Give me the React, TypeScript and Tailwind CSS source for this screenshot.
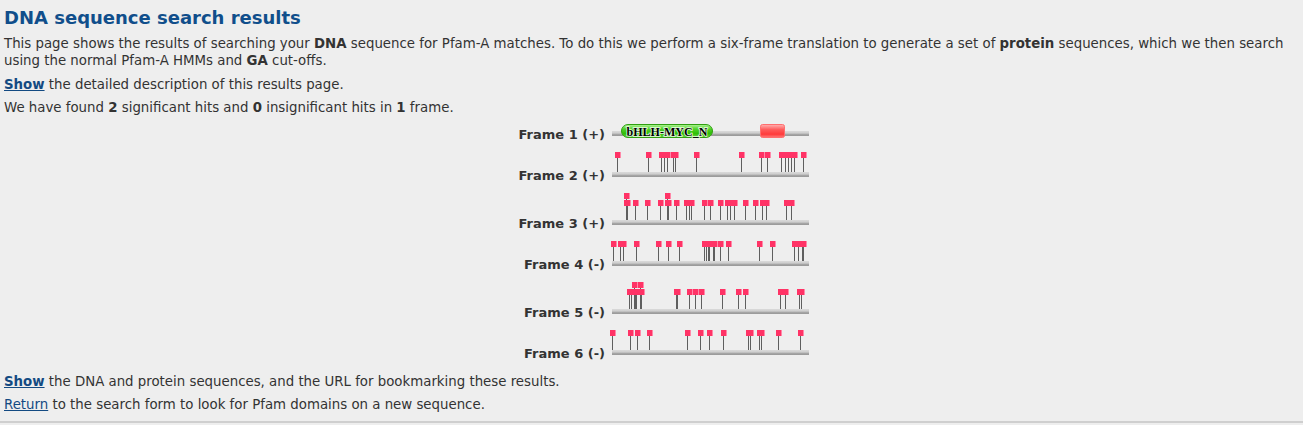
const frames = [
  { label: "Frame 2 (+)", h: 41, lower: [5, 36, 49, 52, 55, 61, 63, 84, 129, 149, 155, 169, 173, 176, 179, 182, 191], upper: [] as number[] },
  {
    label: "Frame 3 (+)",
    h: 48,
    lower: [14, 15, 23, 35, 48, 55, 56, 64, 74, 77, 79, 92, 98, 108, 115, 118, 122, 133, 143, 150, 154, 174, 179],
    upper: [14, 55],
  },
  { label: "Frame 4 (-)", h: 41, lower: [1, 8, 11, 24, 46, 56, 67, 92, 94, 96, 97, 101, 102, 108, 116, 147, 160, 182, 186, 190, 191], upper: [] },
  {
    label: "Frame 5 (-)",
    h: 48,
    lower: [17, 19, 23, 24, 28, 29, 64, 65, 77, 83, 89, 110, 126, 133, 168, 173, 187, 189],
    upper: [22, 28],
  },
  { label: "Frame 6 (-)", h: 41, lower: [0, 18, 25, 37, 75, 88, 97, 111, 136, 138, 147, 149, 166, 188], upper: [] },
];

const TRACK_W = 197;

function Track({ y }: { y: number }) {
  return <rect x={0} y={y} width={TRACK_W} height={5} fill="url(#track)" />;
}

function Head({ x, y }: { x: number; y: number }) {
  return (
    <g>
      <rect x={x - 2} y={y} width={6} height={6} fill="#ff3366" />
      <rect x={x + 3} y={y} width={1} height={6} fill="#ff88a8" />
    </g>
  );
}

function Defs() {
  return (
    <defs>
      <linearGradient id="track" x1="0" y1="0" x2="0" y2="1">
        <stop offset="0" stopColor="#dadada" />
        <stop offset="0.45" stopColor="#cccccc" />
        <stop offset="0.6" stopColor="#a9a9a9" />
        <stop offset="1" stopColor="#979797" />
      </linearGradient>
      <linearGradient id="pill" x1="0" y1="0" x2="0" y2="1">
        <stop offset="0" stopColor="#b5f59c" />
        <stop offset="0.35" stopColor="#4fd22a" />
        <stop offset="0.7" stopColor="#2fbf05" />
        <stop offset="1" stopColor="#6ad84a" />
      </linearGradient>
      <linearGradient id="motif" x1="0" y1="0" x2="0" y2="1">
        <stop offset="0" stopColor="#ffb3b3" />
        <stop offset="0.4" stopColor="#ff5a5a" />
        <stop offset="0.75" stopColor="#ff3b3b" />
        <stop offset="1" stopColor="#ff7a7a" />
      </linearGradient>
    </defs>
  );
}

function LollipopFrame({ h, lower, upper }: { h: number; lower: number[]; upper: number[] }) {
  const trackY = h - 12;
  const lowY = trackY - 20;
  const upY = trackY - 27;
  return (
    <svg width={TRACK_W} height={h} className="block overflow-visible">
      <Defs />
      <Track y={trackY} />
      {upper.map((s, i) => (
        <rect key={"us" + i} x={s} y={upY + 6} width={1} height={trackY - upY - 6} fill="#5f5f5f" />
      ))}
      {lower.map((s, i) => (
        <rect key={"ls" + i} x={s} y={lowY + 6} width={1} height={trackY - lowY - 6} fill="#5f5f5f" />
      ))}
      {lower.map((s, i) => (
        <Head key={"lh" + i} x={s} y={lowY} />
      ))}
      {upper.map((s, i) => (
        <Head key={"uh" + i} x={s} y={upY} />
      ))}
    </svg>
  );
}

function DomainFrame() {
  return (
    <svg width={TRACK_W} height={21} className="block overflow-visible">
      <Defs />
      <Track y={9} />
      <rect x={9.5} y={2.5} width={91} height={13} rx={6.5} fill="url(#pill)" stroke="#2f9f10" />
      <text
        x={55}
        y={13.5}
        textAnchor="middle"
        fontFamily="'Liberation Serif', serif"
        fontWeight="bold"
        fontSize={13}
        fill="#000"
        stroke="#eaffe0"
        strokeWidth={1.6}
        paintOrder="stroke"
        textLength={81}
        lengthAdjust="spacingAndGlyphs"
      >
        bHLH-MYC_N
      </text>
      <rect x={148.5} y={2.5} width={24} height={13} rx={2} fill="url(#motif)" stroke="#ff6e6e" />
    </svg>
  );
}

function FrameRow({ label, height, children }: { label: string; height: number; children: React.ReactNode }) {
  return (
    <div className="flex items-end justify-center" style={{ height }}>
      <div className="w-[111px] text-right text-[13px] font-bold leading-[17px]">{label}</div>
      <div className="ml-[7px]">{children}</div>
    </div>
  );
}

export default function App() {
  return (
    <div className="min-h-[425px] bg-[#eeeeee] text-[13.33px] leading-[17px] text-[#333] [font-family:'DejaVu_Sans',Verdana,sans-serif]">
      <div className="px-1 pt-[7px]">
        <h1 className="text-[18px] leading-[22px] font-bold text-[#104e8b]">DNA sequence search results</h1>
        <p className="mt-[6px]">
          This page shows the results of searching your <b>DNA</b> sequence for Pfam-A matches. To do this we perform a
          six-frame translation to generate a set of <b>protein</b> sequences, which we then search using the normal
          Pfam-A HMMs and <b>GA</b> cut-offs.
        </p>
        <p className="mt-[7px]">
          <a href="#" className="font-bold text-[#134a82] underline">
            Show
          </a>{" "}
          the detailed description of this results page.
        </p>
        <p className="mt-[6px]">
          We have found <b>2</b> significant hits and <b>0</b> insignificant hits in <b>1</b> frame.
        </p>

        <div className="mt-[6px]">
          <FrameRow label="Frame 1 (+)" height={21}>
            <DomainFrame />
          </FrameRow>
          {frames.map((f) => (
            <FrameRow key={f.label} label={f.label} height={f.h}>
              <LollipopFrame h={f.h} lower={f.lower} upper={f.upper} />
            </FrameRow>
          ))}
        </div>

        <p className="mt-[11px]">
          <a href="#" className="font-bold text-[#134a82] underline">
            Show
          </a>{" "}
          the DNA and protein sequences, and the URL for bookmarking these results.
        </p>
        <p className="mt-[6px]">
          <a href="#" className="text-[#134a82] underline">
            Return
          </a>{" "}
          to the search form to look for Pfam domains on a new sequence.
        </p>
      </div>
      <div className="mt-[8px] border-t-2 border-[#cfcfcf]" />
    </div>
  );
}
